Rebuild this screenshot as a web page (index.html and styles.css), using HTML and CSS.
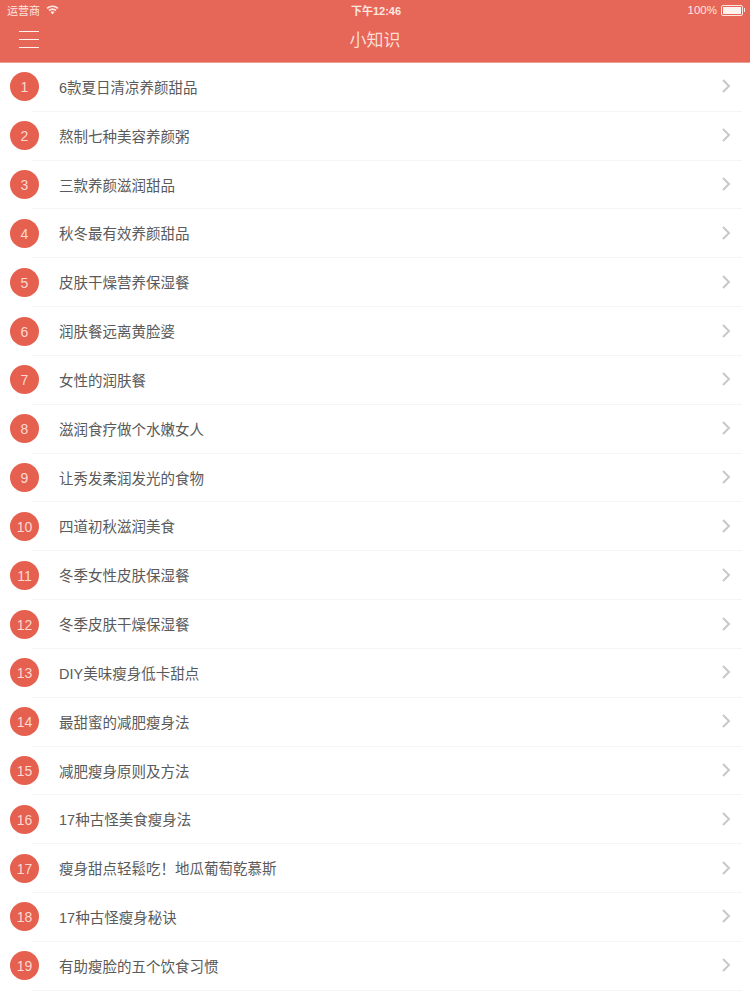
FILE: index.html
```html
<!DOCTYPE html>
<html lang="zh">
<head>
<meta charset="utf-8">
<title>小知识</title>
<link rel="stylesheet" href="styles.css">
</head>
<body>
<header class="top">
  <div class="status">
    <div class="status-left"><span>运营商</span>
      <svg class="wifi" width="13" height="10" viewBox="0 0 13 10"><path d="M1 3.400C4.300.6 8.700.6 12 3.400M3 5.500c2.200-1.800 4.800-1.800 7 0" fill="none" stroke="#fde6e0" stroke-width="1.700"/><path d="M4.500 6.900 6.500 9.500l2-2.600c-1.300-.9-2.700-.9-4 0z" fill="#fde6e0"/></svg>
    </div>
    <div class="status-time">下午12:46</div>
    <div class="status-right"><span>100%</span>
      <span class="battery"><span class="battery-fill"></span></span><span class="battery-tip"></span>
    </div>
  </div>
  <div class="nav">
    <div class="burger"><i></i><i></i><i></i></div>
    <div class="title">小知识</div>
  </div>
</header>
<ul class="list">
  <li class="row"><span class="num">1</span><div class="body"><span class="text">6款夏日清凉养颜甜品</span><svg class="chev" width="10" height="16" viewBox="0 0 10 16"><path d="M2 2 8 8l-6 6"/></svg></div></li>
  <li class="row"><span class="num">2</span><div class="body"><span class="text">熬制七种美容养颜粥</span><svg class="chev" width="10" height="16" viewBox="0 0 10 16"><path d="M2 2 8 8l-6 6"/></svg></div></li>
  <li class="row"><span class="num">3</span><div class="body"><span class="text">三款养颜滋润甜品</span><svg class="chev" width="10" height="16" viewBox="0 0 10 16"><path d="M2 2 8 8l-6 6"/></svg></div></li>
  <li class="row"><span class="num">4</span><div class="body"><span class="text">秋冬最有效养颜甜品</span><svg class="chev" width="10" height="16" viewBox="0 0 10 16"><path d="M2 2 8 8l-6 6"/></svg></div></li>
  <li class="row"><span class="num">5</span><div class="body"><span class="text">皮肤干燥营养保湿餐</span><svg class="chev" width="10" height="16" viewBox="0 0 10 16"><path d="M2 2 8 8l-6 6"/></svg></div></li>
  <li class="row"><span class="num">6</span><div class="body"><span class="text">润肤餐远离黄脸婆</span><svg class="chev" width="10" height="16" viewBox="0 0 10 16"><path d="M2 2 8 8l-6 6"/></svg></div></li>
  <li class="row"><span class="num">7</span><div class="body"><span class="text">女性的润肤餐</span><svg class="chev" width="10" height="16" viewBox="0 0 10 16"><path d="M2 2 8 8l-6 6"/></svg></div></li>
  <li class="row"><span class="num">8</span><div class="body"><span class="text">滋润食疗做个水嫩女人</span><svg class="chev" width="10" height="16" viewBox="0 0 10 16"><path d="M2 2 8 8l-6 6"/></svg></div></li>
  <li class="row"><span class="num">9</span><div class="body"><span class="text">让秀发柔润发光的食物</span><svg class="chev" width="10" height="16" viewBox="0 0 10 16"><path d="M2 2 8 8l-6 6"/></svg></div></li>
  <li class="row"><span class="num">10</span><div class="body"><span class="text">四道初秋滋润美食</span><svg class="chev" width="10" height="16" viewBox="0 0 10 16"><path d="M2 2 8 8l-6 6"/></svg></div></li>
  <li class="row"><span class="num">11</span><div class="body"><span class="text">冬季女性皮肤保湿餐</span><svg class="chev" width="10" height="16" viewBox="0 0 10 16"><path d="M2 2 8 8l-6 6"/></svg></div></li>
  <li class="row"><span class="num">12</span><div class="body"><span class="text">冬季皮肤干燥保湿餐</span><svg class="chev" width="10" height="16" viewBox="0 0 10 16"><path d="M2 2 8 8l-6 6"/></svg></div></li>
  <li class="row"><span class="num">13</span><div class="body"><span class="text">DIY美味瘦身低卡甜点</span><svg class="chev" width="10" height="16" viewBox="0 0 10 16"><path d="M2 2 8 8l-6 6"/></svg></div></li>
  <li class="row"><span class="num">14</span><div class="body"><span class="text">最甜蜜的减肥瘦身法</span><svg class="chev" width="10" height="16" viewBox="0 0 10 16"><path d="M2 2 8 8l-6 6"/></svg></div></li>
  <li class="row"><span class="num">15</span><div class="body"><span class="text">减肥瘦身原则及方法</span><svg class="chev" width="10" height="16" viewBox="0 0 10 16"><path d="M2 2 8 8l-6 6"/></svg></div></li>
  <li class="row"><span class="num">16</span><div class="body"><span class="text">17种古怪美食瘦身法</span><svg class="chev" width="10" height="16" viewBox="0 0 10 16"><path d="M2 2 8 8l-6 6"/></svg></div></li>
  <li class="row"><span class="num">17</span><div class="body"><span class="text">瘦身甜点轻鬆吃！地瓜葡萄乾慕斯</span><svg class="chev" width="10" height="16" viewBox="0 0 10 16"><path d="M2 2 8 8l-6 6"/></svg></div></li>
  <li class="row"><span class="num">18</span><div class="body"><span class="text">17种古怪瘦身秘诀</span><svg class="chev" width="10" height="16" viewBox="0 0 10 16"><path d="M2 2 8 8l-6 6"/></svg></div></li>
  <li class="row"><span class="num">19</span><div class="body"><span class="text">有助瘦脸的五个饮食习惯</span><svg class="chev" width="10" height="16" viewBox="0 0 10 16"><path d="M2 2 8 8l-6 6"/></svg></div></li>
</ul>
</body>
</html>
```
FILE: styles.css
```css
html, body { margin: 0; padding: 0; }
body {
  width: 750px;
  height: 1000px;
  overflow: hidden;
  background: #fff;
  font-family: "Liberation Sans", "Noto Sans CJK SC", sans-serif;
}
.top {
  box-sizing: border-box;
  height: 63px;
  background: #e66758;
  border-bottom: 1px solid #ee9d92;
  color: #fde6e0;
}
.status {
  height: 20px;
  padding: 0 5px 0 7px;
  display: grid;
  grid-template-columns: 1fr auto 1fr;
  align-items: center;
  font-size: 11px;
}
.status-left { display: flex; align-items: center; gap: 6px; }
.status-time { font-weight: 700; font-size: 11px; }
.status-right { display: flex; align-items: center; justify-content: flex-end; font-size: 11.500px; }
.battery {
  width: 18px;
  height: 7px;
  margin-left: 4px;
  padding: 1px;
  border: 1px solid #fde6e0;
  border-radius: 2px;
  display: flex;
}
.battery-fill { flex: 1; background: #fff3ef; }
.battery-tip { width: 1px; height: 4px; margin-left: 1px; background: #fde6e0; }
.nav {
  height: 42px;
  display: flex;
  align-items: center;
  position: relative;
  padding-left: 19px;
}
.burger { width: 20px; display: flex; flex-direction: column; gap: 7px; margin-top: -4px; }
.burger i { display: block; height: 1px; background: #fff3ef; }
.title {
  position: absolute;
  left: 0;
  right: 0;
  top: 10px;
  text-align: center;
  font-size: 17px;
  line-height: 22px;
  color: #fcdcd4;
}
.list { list-style: none; margin: 0; padding: 0; }
.row {
  height: 48.830px;
  display: flex;
  align-items: stretch;
  padding-left: 10px;
}
.num {
  flex: none;
  align-self: center;
  width: 29px;
  height: 29px;
  margin-top: -1px;
  border-radius: 50%;
  background: #e5604f;
  color: #fbd9d2;
  font-size: 14px;
  line-height: 30px;
  text-align: center;
}
.body {
  flex: 1;
  margin-left: -7px;
  margin-right: 8px;
  padding-left: 27px;
  padding-right: 11px;
  border-bottom: 1px solid #f5f5f5;
  display: flex;
  align-items: center;
  justify-content: space-between;
}
.text { font-size: 14.500px; color: #5a5a5a; margin-top: -1px; }
.chev { flex: none; margin-top: -1px; }
.chev path { fill: none; stroke: #c8c8c8; stroke-width: 2; }
```
